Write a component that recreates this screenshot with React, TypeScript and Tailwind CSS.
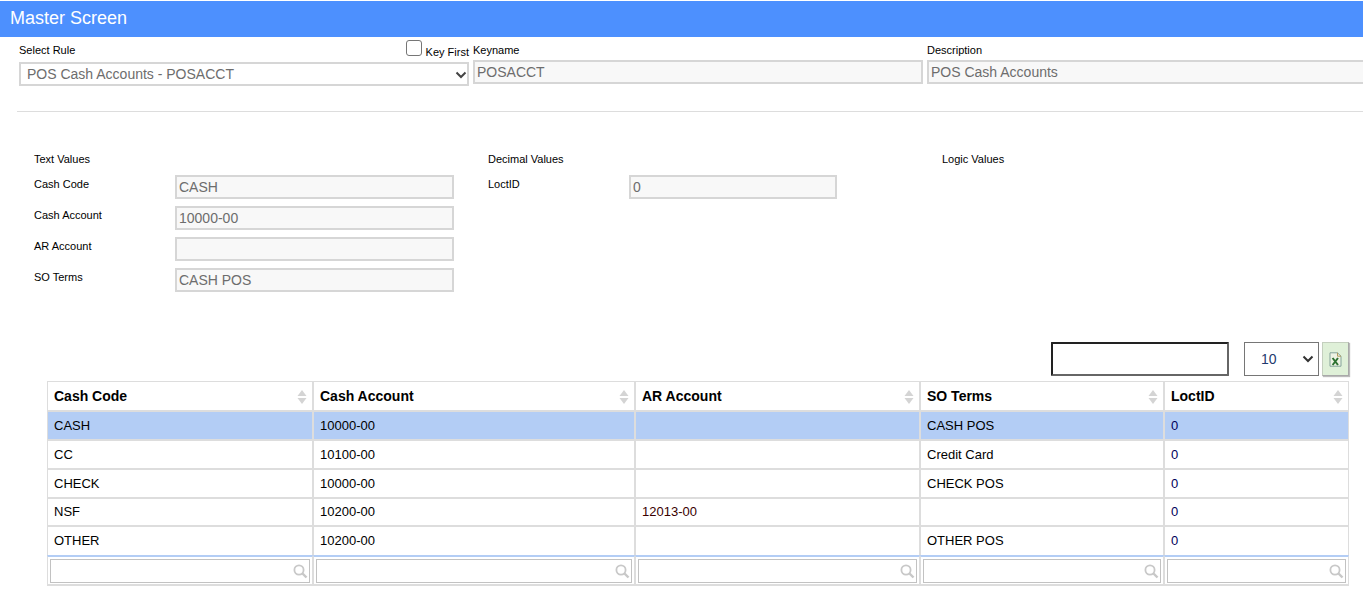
import React from "react";

const Sort = () => (
  <svg width="10" height="16" viewBox="0 0 10 16" className="absolute right-[5px] top-[7px]">
    <path d="M5 1 L9.5 7 L0.5 7 Z" fill="#d4d4d4" />
    <path d="M5 15 L9.5 9 L0.5 9 Z" fill="#d4d4d4" />
  </svg>
);

const Search = () => (
  <svg width="15" height="15" viewBox="0 0 15 15" fill="none" stroke="#c8c8c8" className="absolute right-[2px] top-[5px]">
    <circle cx="6" cy="6" r="4.6" strokeWidth="1.8" />
    <path d="M9.5 9.5 L13.5 13.5" strokeWidth="2.4" />
  </svg>
);

const fieldCls =
  "block h-6 border-2 border-[#d6d6d6] bg-[#f8f8f8] px-[2px] text-sm leading-5 text-[#6d6d6d]";

const Field = ({ value, className }: { value: string; className: string }) => (
  <input readOnly value={value} className={`${fieldCls} ${className}`} />
);

const cols = [
  { name: "Cash Code", w: "w-[266px]" },
  { name: "Cash Account", w: "w-[322px]" },
  { name: "AR Account", w: "w-[285px]" },
  { name: "SO Terms", w: "w-[244px]" },
  { name: "LoctID", w: "w-[185px]" },
];

const rows = [
  { h: "h-[29px]", c: ["CASH", "10000-00", "", "CASH POS", "0"], sel: true },
  { h: "h-[29px]", c: ["CC", "10100-00", "", "Credit Card", "0"] },
  { h: "h-[29px]", c: ["CHECK", "10000-00", "", "CHECK POS", "0"] },
  { h: "h-[28px]", c: ["NSF", "10200-00", "12013-00", "", "0"] },
  { h: "h-[29px]", c: ["OTHER", "10200-00", "", "OTHER POS", "0"], last: true },
];

const textRows = [
  ["Cash Code", "CASH"],
  ["Cash Account", "10000-00"],
  ["AR Account", ""],
  ["SO Terms", "CASH POS"],
];

export default function App() {
  return (
    <div className="h-[593px] w-[1363px] overflow-hidden bg-white pt-px font-['Liberation_Sans',Arial,sans-serif] text-[11px] text-black">
      <div className="flex h-9 items-center bg-[#4d90fe] pb-[2px] pl-[10px] text-lg text-white">Master Screen</div>

      <div className="ml-[19px] flex h-[50px] gap-1">
        <div className="w-[450px] shrink-0">
          <div className="flex h-[25px] items-start justify-between">
            <span className="mt-[6px] leading-[14px]">Select Rule</span>
            <label className="mt-[3px] flex items-start">
              <input type="checkbox" className="m-0 h-4 w-4 appearance-none rounded-[3px] border border-[#767676] bg-white" />
              <span className="ml-[4px] mt-[5px] text-[11px] leading-[14px]">Key First</span>
            </label>
          </div>
          <div className="relative">
            <select className="block h-6 w-full appearance-none border-2 border-[#d6d6d6] bg-white pl-[6px] text-sm text-[#6d6d6d]">
              <option>POS Cash Accounts - POSACCT</option>
            </select>
            <svg width="12" height="8" viewBox="0 0 12 8" fill="none" stroke="#444" strokeWidth="2" className="pointer-events-none absolute right-[2px] top-[9px]">
              <path d="M1.5 1.5 L6 6 L10.5 1.5" />
            </svg>
          </div>
        </div>
        <div className="w-[450px] shrink-0">
          <div className="mt-[6px] h-[17px] leading-[14px]">Keyname</div>
          <Field value="POSACCT" className="w-full" />
        </div>
        <div className="w-[440px] shrink-0">
          <div className="mt-[6px] h-[17px] leading-[14px]">Description</div>
          <Field value="POS Cash Accounts" className="w-[440px]" />
        </div>
      </div>

      <hr className="ml-[17px] mt-6 border-t border-[#ddd]" />

      <div className="ml-[34px] mt-10 flex h-[147px] text-[11px] leading-[14px]">
        <div className="w-[454px]">
          <div className="h-[23px]">Text Values</div>
          {textRows.map(([label, value]) => (
            <div key={label} className="flex h-[31px]">
              <span className="w-[141px] pt-[2px]">{label}</span>
              <Field value={value} className="w-[279px]" />
            </div>
          ))}
        </div>
        <div className="w-[454px]">
          <div className="h-[23px]">Decimal Values</div>
          <div className="flex h-[31px]">
            <span className="w-[141px] pt-[2px]">LoctID</span>
            <Field value="0" className="w-[208px]" />
          </div>
        </div>
        <div>Logic Values</div>
      </div>

      <div className="ml-[47px] mt-[43px] w-[1302px]">
        <div className="flex h-[34px] justify-end">
          <input readOnly className="h-[34px] w-[178px] rounded-[1px] border-2 border-t-[#222] border-l-[#222] border-r-[#666] border-b-[#666] bg-white" />
          <div className="relative ml-[15px] w-[75px]">
            <select className="block h-[34px] w-full appearance-none border border-[#767676] bg-white pl-4 text-sm text-[#1f3a6e]">
              <option>10</option>
            </select>
            <svg width="12" height="8" viewBox="0 0 12 8" fill="none" stroke="#333" strokeWidth="2" className="pointer-events-none absolute right-[5px] top-[13px]">
              <path d="M1.5 1.5 L6 6 L10.5 1.5" />
            </svg>
          </div>
          <button className="ml-[3px] flex h-[34px] w-[27px] items-center justify-center border border-[#c4cfbe] border-r-[#a9a9a9] border-b-[#a9a9a9] bg-[#dff0d8] shadow-[1px_1px_1px_#bbb]">
            <svg width="13" height="15" viewBox="0 0 13 15">
              <path d="M1 .8 H8.5 L12 4.2 V14.2 H1 Z" fill="#eef3e4" stroke="#84a39a" strokeWidth="1" />
              <path d="M8.5 .8 V4.2 H12" fill="none" stroke="#b39a5e" strokeWidth="1" />
              <path d="M3.6 6 L9 13 M9 6 L3.6 13" stroke="#2e7232" strokeWidth="2" fill="none" />
            </svg>
          </button>
        </div>

        <table className="mt-[5px] table-fixed border-separate border-spacing-0 text-[13px]">
          <thead>
            <tr className="h-[30px]">
              {cols.map((c) => (
                <th key={c.name} className={`${c.w} relative border border-[#ddd] pl-[6px] text-left text-sm font-bold`}>
                  {c.name}
                  <Sort />
                </th>
              ))}
            </tr>
          </thead>
          <tbody>
            {rows.map((r) => (
              <tr key={r.c[0]} className={`${r.h} ${r.sel ? "bg-[#b3cdf5]" : "bg-white"}`}>
                {r.c.map((v, i) => (
                  <td
                    key={i}
                    className={`border border-[#ddd] pl-[6px] ${r.last ? "border-b-0" : ""} ${i === 4 ? "text-[#00005a]" : ""} ${v === "12013-00" ? "text-[#3a0000]" : ""}`}
                  >
                    {v}
                  </td>
                ))}
              </tr>
            ))}
          </tbody>
          <tfoot>
            <tr className="h-[31px]">
              {cols.map((c) => (
                <td key={c.name} className="border border-b-2 border-t-2 border-[#ddd] border-t-[#b3cdf5] px-[2px]">
                  <div className="relative">
                    <input readOnly className="block h-6 w-full border border-[#c2c2c2] bg-white" />
                    <Search />
                  </div>
                </td>
              ))}
            </tr>
          </tfoot>
        </table>
      </div>
    </div>
  );
}
